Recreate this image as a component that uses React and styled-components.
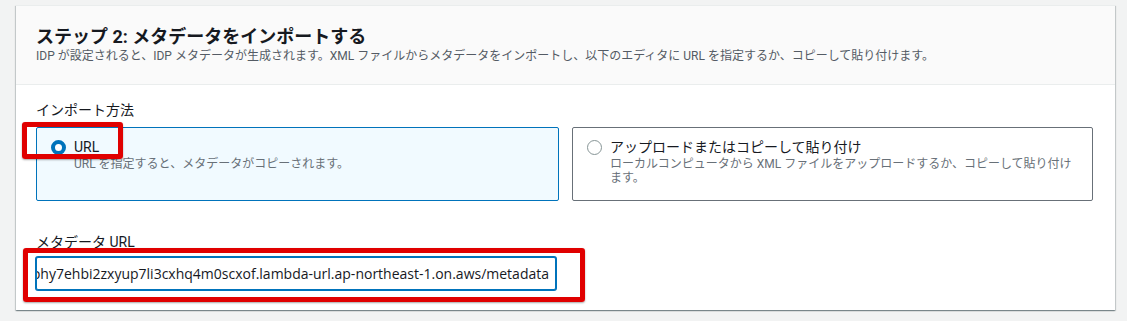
import React from 'react';
import styled, { createGlobalStyle } from 'styled-components';

const GlobalStyle = createGlobalStyle`
  html, body {
    margin: 0;
    padding: 0;
    background: #f2f3f3;
  }
  body {
    font-family: Roboto, "Noto Sans CJK JP", sans-serif;
    color: #16191f;
  }
`;

const Page = styled.div`
  padding: 5px 12px 11px 16px;
`;

const Card = styled.section`
  background: #fff;
  border-top: 1px solid #eaeded;
  box-shadow: 0 1px 1px 0 rgba(0, 28, 36, 0.3), 1px 1px 1px 0 rgba(0, 28, 36, 0.15),
    -1px 1px 1px 0 rgba(0, 28, 36, 0.15);
`;

const Header = styled.header`
  background: #fafafa;
  padding: 20px 20px 20px;
  border-bottom: 1px solid #eaeded;
`;

const Title = styled.h2`
  margin: 0;
  font-size: 18px;
  line-height: 22px;
  font-weight: 700;
  color: #16191f;
`;

const Subtitle = styled.p`
  margin: 0;
  font-size: 12px;
  line-height: 16px;
  color: #545b64;
`;

const Body = styled.div`
  padding: 15px 20px 20px;
`;

const FieldLabel = styled.div`
  font-size: 14px;
  line-height: 20px;
  color: #16191f;
`;

const Tiles = styled.div`
  display: grid;
  grid-template-columns: 523px 521px;
  column-gap: 13px;
  margin-top: 7px;
`;

const Tile = styled.div`
  position: relative;
  box-sizing: border-box;
  height: 74px;
  padding: 9px 14px 0 14px;
  border: 1px solid ${(p) => (p.$selected ? '#0073bb' : '#687078')};
  border-radius: 2px;
  background: ${(p) => (p.$selected ? '#f1faff' : '#fff')};
`;

const TileHead = styled.div`
  display: flex;
  align-items: center;
  gap: 8px;
  font-size: 14px;
  line-height: 20px;
  color: #16191f;
`;

const Radio = styled.span`
  box-sizing: border-box;
  flex: none;
  width: 15px;
  height: 15px;
  border-radius: 50%;
  background: #fff;
  border: ${(p) => (p.$checked ? '4.5px solid #0073bb' : '1px solid #879596')};
`;

const TileDesc = styled.div`
  padding-left: 23px;
  font-size: 12px;
  line-height: 14px;
  color: #687078;
`;

const Field = styled.div`
  margin-top: 31px;
`;

const InputWrap = styled.div`
  position: relative;
  margin-top: 5px;
  width: 520px;
`;

const Input = styled.div`
  box-sizing: border-box;
  height: 33px;
  display: flex;
  justify-content: flex-end;
  align-items: center;
  overflow: hidden;
  white-space: nowrap;
  padding: 0 6px;
  border: 1px solid #0073bb;
  box-shadow: 0 0 0 1px #0073bb;
  border-radius: 2px;
  background: #fff;
  font-family: "Open Sans", "Noto Sans CJK JP", sans-serif;
  font-size: 14px;
  color: #16191f;
`;

const Highlight = styled.div`
  position: absolute;
  box-sizing: border-box;
  left: ${(p) => p.$x}px;
  top: ${(p) => p.$y}px;
  width: ${(p) => p.$w}px;
  height: ${(p) => p.$h}px;
  border: 5px solid #e00000;
  border-radius: 3px;
  box-shadow: 0 1px 2px rgba(0, 0, 0, 0.35);
  pointer-events: none;
`;

const options = [
  {
    id: 'url',
    label: 'URL',
    desc: 'URL を指定すると、メタデータがコピーされます。',
  },
  {
    id: 'upload',
    label: 'アップロードまたはコピーして貼り付け',
    desc: (
      <>
        ローカルコンピュータから XML ファイルをアップロードするか、コピーして貼り付け
        <br />
        ます。
      </>
    ),
  },
];

export default function App() {
  const selected = 'url';
  return (
    <Page>
      <GlobalStyle />
      <Card>
        <Header>
          <Title>ステップ 2: メタデータをインポートする</Title>
          <Subtitle>
            IDP が設定されると、IDP メタデータが生成されます。XML ファイルからメタデータをインポートし、以下のエディタに URL を指定するか、コピーして貼り付けます。
          </Subtitle>
        </Header>
        <Body>
          <FieldLabel>インポート方法</FieldLabel>
          <Tiles>
            {options.map((o) => (
              <Tile key={o.id} $selected={o.id === selected}>
                <TileHead>
                  <Radio $checked={o.id === selected} />
                  {o.label}
                </TileHead>
                <TileDesc>{o.desc}</TileDesc>
                {o.id === selected && <Highlight $x={-15} $y={-6} $w={101} $h={37} />}
              </Tile>
            ))}
          </Tiles>
          <Field>
            <FieldLabel>メタデータ URL</FieldLabel>
            <InputWrap>
              <Input>
                https://yvq7ohy7ehbi2zxyup7li3cxhq4m0scxof.lambda-url.ap-northeast-1.on.aws/metadata
              </Input>
              <Highlight $x={-13} $y={-9} $w={562} $h={54} />
            </InputWrap>
          </Field>
        </Body>
      </Card>
    </Page>
  );
}
